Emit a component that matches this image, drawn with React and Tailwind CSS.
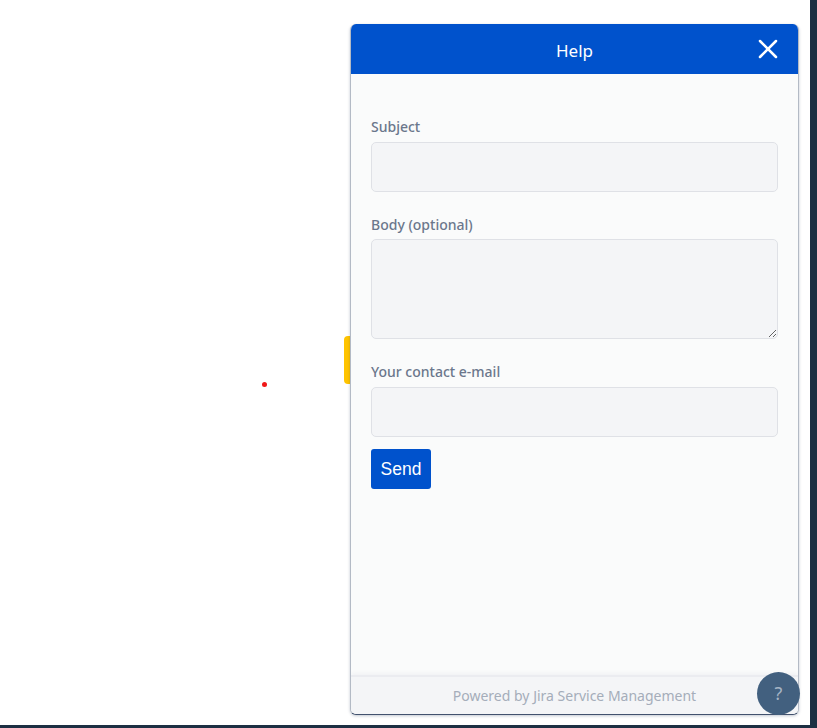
import React from 'react'
import { X } from 'lucide-react'

const uiFont = 'font-["Noto_Sans",sans-serif]'

function Field({ label, children, className }) {
  return (
    <div className={className}>
      <label className="block text-[14px] leading-[19px] font-medium text-[#6b778c]">{label}</label>
      {children}
    </div>
  )
}

const inputClass =
  'block w-full bg-[#f4f5f7] border border-[#dfe1e6] rounded-[5px]'

export default function App() {
  return (
    <div className={`h-[728px] w-[817px] overflow-hidden bg-[#1d2f42] ${uiFont}`}>
      <div className="relative h-[725px] w-[810px] bg-white flex justify-end pt-[24px] pr-[11px] pb-[10px]">
        {/* stray red dot */}
        <div className="absolute left-[262px] top-[382px] w-[5px] h-[5px] rounded-full bg-[#f01818]" />

        {/* widget */}
        <div className="relative w-[449px] h-[691px]">
          <div className="absolute left-[-6px] top-[312px] w-[9px] h-[48px] rounded-l-[4px] bg-[#ffc400] border-r border-[#d9a600]" />

          <div className="relative h-full flex flex-col rounded-[6px] overflow-hidden bg-[#fafbfb] border border-[#b3bac5] border-t-0 border-b-[#42526e] shadow-[0_1px_3px_rgba(9,30,66,0.25)]">
            <header className="relative h-[50px] shrink-0 bg-[#0052cc] flex items-center justify-center text-white text-[17px] pt-[3px]">
              Help
              <X className="absolute right-[14px] top-[9px]" size={32} strokeWidth={1.9} />
            </header>

            <div className="flex-1 px-[20px] pt-[43px]">
              <Field label="Subject">
                <input className={`${inputClass} h-[50px] mt-[6px]`} />
              </Field>
              <Field label="Body (optional)" className="mt-[23px]">
                <textarea className={`${inputClass} h-[100px] mt-[5px]`} />
              </Field>
              <Field label="Your contact e-mail" className="mt-[23px]">
                <input className={`${inputClass} h-[50px] mt-[6px]`} />
              </Field>
              <button className='mt-[12px] w-[60px] h-[40px] rounded-[3px] bg-[#0052cc] text-white text-[17.5px] font-["Liberation_Sans",sans-serif]'>
                Send
              </button>
            </div>

            <footer className="h-[39px] shrink-0 bg-[#f4f5f7] border-t-2 border-[#ebecf0] flex items-center justify-center text-[14px] text-[#a5adba] shadow-[0_-2px_4px_rgba(9,30,66,0.04)]">
              Powered by Jira Service Management
            </footer>
          </div>

          {/* help bubble */}
          <div className="absolute right-[-1px] bottom-0 w-[43px] h-[43px] rounded-full bg-[#42607f] flex items-center justify-center text-[18px] text-[#a5b4c4]">
            ?
          </div>
        </div>
      </div>
    </div>
  )
}
